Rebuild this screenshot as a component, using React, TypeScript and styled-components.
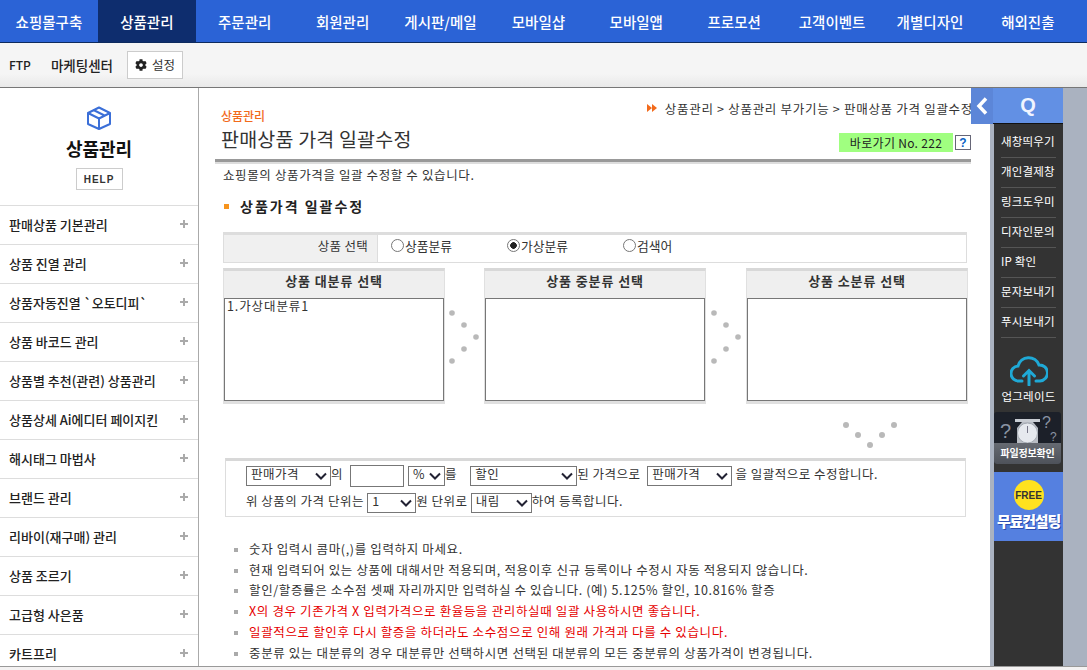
import React from 'react';
import styled, { createGlobalStyle } from 'styled-components';
import { FaCog } from 'react-icons/fa';

const GlobalStyle = createGlobalStyle`
  html, body { margin: 0; padding: 0; height: 100%; overflow: hidden; background: #f4f2f2; }
  body { font-family: "Noto Sans CJK KR", "Noto Sans", sans-serif; font-size: 12px; color: #333; }
  * { box-sizing: border-box; }
`;

const Page = styled.div`
  width: 1087px;
  height: 670px;
  display: flex;
  flex-direction: column;
  overflow: hidden;
`;

const TopNav = styled.nav`
  height: 43px;
  display: flex;
  flex: none;
  background: #2b63d6;
  border-bottom: 1px solid #0d2a5e;
`;

const NavItem = styled.a<{ $active?: boolean }>`
  width: 97.9px;
  display: flex;
  align-items: center;
  justify-content: center;
  color: #fff;
  font-size: 14.5px;
  font-weight: 500;
  background: ${(p) => (p.$active ? '#0e2d6e' : 'transparent')};
`;

const SubBar = styled.div`
  height: 45px;
  flex: none;
  display: flex;
  align-items: center;
  padding: 0 0 1px 9px;
  background: linear-gradient(#f5f5f5 70%, #e9e9e9);
  border-bottom: 1px solid #777;
  color: #222;
`;

const SubLink = styled.a<{ $gap: number }>`
  font-size: 13.5px;
  font-weight: 500;
  margin-right: ${(p) => p.$gap}px;
  &:first-child { font-size: 12px; }
`;

const SetupButton = styled.button`
  width: 56px;
  height: 28px;
  padding: 0;
  display: flex;
  align-items: center;
  justify-content: center;
  gap: 5px;
  border: 1px solid #ccc;
  background: #fff;
  color: #333;
  font: 12.5px "Noto Sans CJK KR", sans-serif;
`;

const Body = styled.div`
  height: 579px;
  flex: none;
  display: flex;
  border-bottom: 1px solid #999;
  background: #fff;
`;

const Sidebar = styled.aside`
  width: 199px;
  flex: none;
  border-right: 1px solid #aaa;
  overflow: hidden;
`;

const SideHead = styled.div`
  height: 117px;
  padding-top: 18px;
  display: flex;
  flex-direction: column;
  align-items: center;
`;

const SideTitle = styled.h2`
  margin: 5px 0 0;
  font-size: 18px;
  line-height: 26px;
  font-weight: 700;
  color: #111;
`;

const HelpBox = styled.div`
  width: 47px;
  height: 22px;
  margin-top: 7px;
  border: 1px solid #ccc;
  display: flex;
  align-items: center;
  justify-content: center;
  font: 700 10px "Liberation Sans", sans-serif;
  letter-spacing: 1px;
  color: #333;
`;

const SideItem = styled.div`
  height: 39px;
  border-top: 1px solid #ddd;
  padding: 0 10px 2px 9px;
  display: flex;
  align-items: center;
  justify-content: space-between;
  font-size: 13px;
  font-weight: 500;
  color: #222;
  white-space: nowrap;
`;

const Plus = styled.span`
  width: 8px;
  height: 8px;
  background:
    linear-gradient(#aaa, #aaa) center / 100% 2px no-repeat,
    linear-gradient(#aaa, #aaa) center / 2px 100% no-repeat;
`;

const Main = styled.main`
  flex: 1;
  min-width: 0;
  padding-left: 16px;
`;

const PageHead = styled.header`
  width: 758px;
  height: 74px;
  border-bottom: 3px solid #999;
  box-shadow: 0 2px 0 #ddd;
  display: flex;
  justify-content: space-between;
  white-space: nowrap;
`;

const TitleBlock = styled.div`
  padding: 20px 0 0 6px;
`;

const Crumb = styled.div`
  color: #f26a1b;
  font-size: 12px;
  line-height: 16px;
  font-weight: 500;
`;

const Title = styled.h1`
  margin: 1px 0 0;
  font-size: 19.5px;
  line-height: 28px;
  font-weight: 400;
  letter-spacing: 0.2px;
  color: #333;
`;

const HeadRight = styled.div`
  display: flex;
  flex-direction: column;
  align-items: flex-end;
  padding-top: 10px;
`;

const Breadcrumb = styled.div`
  display: flex;
  align-items: center;
  gap: 8px;
  height: 20px;
  font-size: 12.5px;
  letter-spacing: 0.7px;
  color: #333;
`;

const ShortcutRow = styled.div`
  display: flex;
  align-items: center;
  gap: 2px;
  margin: 15px 2px 0 0;
`;

const Shortcut = styled.div`
  width: 114px;
  height: 19px;
  background: #a0ff80;
  display: flex;
  align-items: center;
  justify-content: center;
  font-size: 12px;
  letter-spacing: 0.3px;
  color: #222;
`;

const HelpIcon = styled.div`
  width: 16px;
  height: 15px;
  border: 1px solid #667;
  background: #fff;
  display: flex;
  align-items: center;
  justify-content: center;
  color: #0b62c4;
  font: 700 12px "Liberation Sans", sans-serif;
`;

const Intro = styled.p`
  margin: 4px 0 0 8px;
  font-size: 12.5px;
  line-height: 18px;
  letter-spacing: 0.62px;
  color: #333;
`;

const SectionHead = styled.h3`
  margin: 10px 0 0 9px;
  height: 24px;
  display: flex;
  align-items: center;
  gap: 11px;
  font-size: 14px;
  font-weight: 700;
  letter-spacing: 2px;
  color: #222;
  &::before {
    content: '';
    width: 5px;
    height: 5px;
    background: #f7941d;
  }
`;

const ChoiceRow = styled.div`
  margin: 14px 0 0 8px;
  width: 744px;
  height: 31px;
  display: flex;
  border: 1px solid #ddd;
  border-top-width: 3px;
`;

const ChoiceLabel = styled.div`
  width: 154px;
  background: #f0f0f0;
  border-right: 1px solid #ddd;
  text-align: right;
  padding: 2px 9px 0 0;
  font-size: 12.5px;
  line-height: 17px;
  letter-spacing: 0.3px;
`;

const Choice = styled.label<{ $w: number; $pad?: number }>`
  width: ${(p) => p.$w}px;
  padding: 2px 0 0 ${(p) => p.$pad ?? 0}px;
  display: flex;
  align-items: flex-start;
  font-size: 12.8px;
  line-height: 17px;
`;

const Radio = styled.span<{ $on?: boolean }>`
  width: 13px;
  height: 13px;
  margin: 2px 1px 0 0;
  border: 1px solid #777;
  border-radius: 50%;
  background: ${(p) => (p.$on ? 'radial-gradient(circle, #222 0 3px, #fff 3.6px)' : '#fff')};
`;

const PickerRow = styled.div`
  margin: 5px 0 0 8px;
  display: grid;
  grid-template-columns: 222px 39px 222px 40px 222px;
`;

const Picker = styled.div`
  height: 136px;
  border: 1px solid #e0e0e0;
  border-top: 3px solid #d8d8d8;
  border-bottom-width: 3px;
`;

const PickerHead = styled.div`
  height: 27px;
  background: #efefef;
  text-align: center;
  font-size: 13px;
  line-height: 20px;
  font-weight: 700;
  letter-spacing: 0.9px;
  color: #333;
`;

const ListBox = styled.div`
  height: 103px;
  border: 1px solid #777;
  background: #fff;
  padding: 0 2px;
  font-size: 12.5px;
  line-height: 14px;
  letter-spacing: 0.9px;
`;

const DotsSide = styled.svg`
  width: 39px;
  height: 60px;
  margin-top: 41px;
  justify-self: end;
`;

const DotsDownRow = styled.div`
  height: 54px;
  display: flex;
  justify-content: flex-end;
  padding: 18px 70px 0 0;
  width: 752px;
`;

const FormBox = styled.div`
  margin-left: 10px;
  width: 741px;
  height: 59px;
  border: 1px solid #ddd;
  border-top: 3px solid #d8d8d8;
  padding: 5px 0 0 20px;
  font-size: 12.5px;
  letter-spacing: 0.5px;
  line-height: 16px;
`;

const FormLine = styled.div`
  height: 20px;
  margin-bottom: 7px;
  display: flex;
  align-items: flex-start;
  white-space: pre;
`;

const FakeSelect = styled.span<{ $w: number }>`
  width: ${(p) => p.$w}px;
  height: 20px;
  flex: none;
  border: 1px solid #777;
  display: flex;
  align-items: flex-start;
  justify-content: space-between;
  padding: 0 3px 0 4px;
  line-height: 14px;
  letter-spacing: 0.5px;
`;

const Chevron = styled.svg`
  width: 12px;
  height: 8px;
  margin-top: 5px;
  flex: none;
`;

const FakeInput = styled.span`
  width: 54px;
  height: 22px;
  flex: none;
  border: 1px solid #777;
  margin: -1px 4px 0 7px;
`;

const Notes = styled.ul`
  list-style: none;
  margin: 21px 0 0 19px;
  padding: 0;
`;

const Note = styled.li<{ $red?: boolean }>`
  height: 20.8px;
  display: flex;
  align-items: center;
  gap: 11px;
  font-size: 12.5px;
  white-space: nowrap;
  letter-spacing: 0.64px;
  color: ${(p) => (p.$red ? '#e60000' : '#333')};
  &::before {
    content: '';
    width: 4px;
    height: 4px;
    margin-top: 3px;
    background: #aaa;
  }
`;

const Quick = styled.aside`
  width: 116px;
  flex: none;
  margin-left: -3px;
  display: flex;
  flex-direction: column;
  position: relative;
`;

const QuickTop = styled.div`
  height: 36px;
  flex: none;
  display: flex;
  background: #aab2c0;
`;

const QuickArrow = styled.div`
  width: 22px;
  background: #5c86d8;
  display: flex;
  align-items: center;
  justify-content: center;
`;

const QuickQ = styled.div`
  width: 70px;
  background: #6290e4;
  border-bottom: 1px solid #111;
  color: #f0f4ff;
  display: flex;
  align-items: center;
  justify-content: center;
  font: 700 20px "Liberation Sans", sans-serif;
`;

const QuickBody = styled.div`
  flex: 1;
  display: flex;
  padding-left: 19px;
  background: linear-gradient(to right, #fff 19px, #aab2c0 19px);
`;

const QuickColumn = styled.div`
  width: 69px;
  flex: none;
  margin-left: 4px;
  padding-top: 4px;
  background: #333;
`;

const QuickLink = styled.a`
  display: block;
  height: 30px;
  margin: 0 7px;
  border-bottom: 1px solid #555;
  color: #fff;
  font-size: 11.5px;
  line-height: 26px;
  white-space: nowrap;
  letter-spacing: 0.2px;
`;

const Upgrade = styled.div`
  margin-top: 18px;
  height: 56px;
  display: flex;
  flex-direction: column;
  align-items: center;
  color: #fff;
  font-size: 11.5px;
  letter-spacing: 0.2px;
  line-height: 17px;
  svg { margin-bottom: 2px; }
`;

const FileInfo = styled.div`
  width: 67px;
  height: 52px;
  border-radius: 3px;
  overflow: hidden;
  background: #1c2029;
  display: flex;
  flex-direction: column;
`;

const FileInfoLabel = styled.div`
  height: 21px;
  flex: none;
  background: linear-gradient(#666a72, #4e525a);
  color: #fff;
  font-size: 10px;
  font-weight: 700;
  line-height: 20px;
  text-align: center;
  letter-spacing: -0.2px;
`;

const Consult = styled.div`
  width: 69px;
  height: 69px;
  margin-top: 8px;
  background: #5580e0;
  display: flex;
  flex-direction: column;
  align-items: center;
  padding-top: 8px;
`;

const FreeBadge = styled.div`
  width: 30px;
  height: 30px;
  border-radius: 50%;
  background: #ffe21f;
  color: #333;
  display: flex;
  align-items: center;
  justify-content: center;
  font: 700 10px "Liberation Sans", sans-serif;
`;

const ConsultText = styled.div`
  margin-top: 1px;
  color: #fff;
  font-size: 15px;
  line-height: 20px;
  font-weight: 900;
  letter-spacing: -1.2px;
  white-space: nowrap;
  text-shadow: 1px 1px 0 #2a4cb0;
`;

const navItems = ['쇼핑몰구축', '상품관리', '주문관리', '회원관리', '게시판/메일', '모바일샵', '모바일앱', '프로모션', '고객이벤트', '개별디자인', '해외진출'];
const sideItems = ['판매상품 기본관리', '상품 진열 관리', '상품자동진열 `오토디피`', '상품 바코드 관리', '상품별 추천(관련) 상품관리', '상품상세 Ai에디터 페이지킨', '해시태그 마법사', '브랜드 관리', '리바이(재구매) 관리', '상품 조르기', '고급형 사은품', '카트프리'];
const quickLinks = ['새창띄우기', '개인결제창', '링크도우미', '디자인문의', 'IP 확인', '문자보내기', '푸시보내기'];
const pickers = ['상품 대분류 선택', '상품 중분류 선택', '상품 소분류 선택'];
const notes: { text: string; red?: boolean }[] = [
  { text: '숫자 입력시 콤마(,)를 입력하지 마세요.' },
  { text: '현재 입력되어 있는 상품에 대해서만 적용되며, 적용이후 신규 등록이나 수정시 자동 적용되지 않습니다.' },
  { text: '할인/할증률은 소수점 셋째 자리까지만 입력하실 수 있습니다. (예) 5.125% 할인, 10.816% 할증' },
  { text: 'X의 경우 기존가격 X 입력가격으로 환율등을 관리하실때 일괄 사용하시면 좋습니다.', red: true },
  { text: '일괄적으로 할인후 다시 할증을 하더라도 소수점으로 인해 원래 가격과 다를 수 있습니다.', red: true },
  { text: '중분류 있는 대분류의 경우 대분류만 선택하시면 선택된 대분류의 모든 중분류의 상품가격이 변경됩니다.' },
];

const SideDots = () => (
  <DotsSide viewBox="0 0 39 60">
    {[[7, 4], [19, 16], [31, 28], [19, 40], [7, 52]].map(([cx, cy]) => (
      <circle key={cy} cx={cx} cy={cy} r="2.800" fill="#b9b9b9" />
    ))}
  </DotsSide>
);

const Select = ({ w, children }: { w: number; children: React.ReactNode }) => (
  <FakeSelect $w={w}>
    {children}
    <Chevron viewBox="0 0 12 8">
      <path d="M1 1.500 6 6.500 11 1.500" fill="none" stroke="#223" strokeWidth="2" />
    </Chevron>
  </FakeSelect>
);

export default function App() {
  return (
    <Page>
      <GlobalStyle />
      <TopNav>
        {navItems.map((label, i) => (
          <NavItem key={label} $active={i === 1}>{label}</NavItem>
        ))}
      </TopNav>
      <SubBar>
        <SubLink $gap={20}>FTP</SubLink>
        <SubLink $gap={14}>마케팅센터</SubLink>
        <SetupButton><FaCog size={12} color="#222" />설정</SetupButton>
      </SubBar>
      <Body>
        <Sidebar>
          <SideHead>
            <svg width="26" height="24" viewBox="0 0 26 24" fill="none" stroke="#3b6fd8" strokeWidth="2" strokeLinejoin="round">
              <path d="M13 1.500 24 7v11l-11 5-11-5V7z" />
              <path d="M2 7l11 5.500L24 7M13 12.500V23M7.500 4l11 5.500" />
            </svg>
            <SideTitle>상품관리</SideTitle>
            <HelpBox>HELP</HelpBox>
          </SideHead>
          {sideItems.map((label) => (
            <SideItem key={label}>{label}<Plus /></SideItem>
          ))}
        </Sidebar>
        <Main>
          <PageHead>
            <TitleBlock>
              <Crumb>상품관리</Crumb>
              <Title>판매상품 가격 일괄수정</Title>
            </TitleBlock>
            <HeadRight>
              <Breadcrumb>
                <svg width="10" height="8" viewBox="0 0 10 8"><path d="M0 0l5 4-5 4zM5 0l5 4-5 4z" fill="#f26a1b" /></svg>
                상품관리 &gt; 상품관리 부가기능 &gt; 판매상품 가격 일괄수정
              </Breadcrumb>
              <ShortcutRow>
                <Shortcut>바로가기 No. 222</Shortcut>
                <HelpIcon>?</HelpIcon>
              </ShortcutRow>
            </HeadRight>
          </PageHead>
          <Intro>쇼핑몰의 상품가격을 일괄 수정할 수 있습니다.</Intro>
          <SectionHead>상품가격 일괄수정</SectionHead>
          <ChoiceRow>
            <ChoiceLabel>상품 선택</ChoiceLabel>
            <Choice $w={129} $pad={13}><Radio />상품분류</Choice>
            <Choice $w={116}><Radio $on />가상분류</Choice>
            <Choice $w={100}><Radio />검색어</Choice>
          </ChoiceRow>
          <PickerRow>
            <Picker>
              <PickerHead>{pickers[0]}</PickerHead>
              <ListBox>1.가상대분류1</ListBox>
            </Picker>
            <SideDots />
            <Picker>
              <PickerHead>{pickers[1]}</PickerHead>
              <ListBox />
            </Picker>
            <SideDots />
            <Picker>
              <PickerHead>{pickers[2]}</PickerHead>
              <ListBox />
            </Picker>
          </PickerRow>
          <DotsDownRow>
            <svg width="54" height="26" viewBox="0 0 54 26">
              {[[3, 3], [15, 13], [27, 23], [39, 13], [51, 3]].map(([cx, cy]) => (
                <circle key={cx} cx={cx} cy={cy} r="3" fill="#b9b9b9" />
              ))}
            </svg>
          </DotsDownRow>
          <FormBox>
            <FormLine>
              <Select w={85}>판매가격</Select>
              의
              <FakeInput />
              <Select w={37}>%</Select>
              를{'    '}
              <Select w={107}>할인</Select>
              {'된 가격으로  '}<Select w={85}>판매가격</Select> 을 일괄적으로 수정합니다.
            </FormLine>
            <FormLine>
              {'위 상품의 가격 단위는 '}
              <Select w={49}>1</Select>
              원 단위로 <Select w={61}>내림</Select>
              하여 등록합니다.
            </FormLine>
          </FormBox>
          <Notes>
            {notes.map((n) => (
              <Note key={n.text} $red={n.red}>{n.text}</Note>
            ))}
          </Notes>
        </Main>
        <Quick>
          <QuickTop>
            <QuickArrow>
              <svg width="12" height="18" viewBox="0 0 12 18" fill="none" stroke="#fff" strokeWidth="3.500"><path d="M10 1.500 3 9l7 7.500" /></svg>
            </QuickArrow>
            <QuickQ>Q</QuickQ>
          </QuickTop>
          <QuickBody>
            <QuickColumn>
              {quickLinks.map((label) => (
                <QuickLink key={label}>{label}</QuickLink>
              ))}
              <Upgrade>
                <svg width="38" height="30" viewBox="0 0 38 30" fill="none" stroke="#1fa9d6" strokeWidth="3" strokeLinecap="round">
                  <path d="M12 25H9a7.500 7.500 0 0 1-1-15A11 11 0 0 1 29 9a8 8 0 0 1 1 16h-4" />
                  <path d="M19 29V15M13.500 20 19 14.500 24.500 20" />
                </svg>
                업그레이드
              </Upgrade>
              <FileInfo>
                <svg width="67" height="31" viewBox="0 0 67 31">
                  <text x="6" y="26" fontSize="20" fill="#8a93a3" fontFamily="Liberation Sans">?</text>
                  <text x="48" y="16" fontSize="16" fill="#8a93a3" fontFamily="Liberation Sans">?</text>
                  <text x="56" y="29" fontSize="12" fill="#8a93a3" fontFamily="Liberation Sans">?</text>
                  <rect x="21" y="7" width="25" height="3" fill="#c8ccd2" />
                  <path d="M28 10h11l5 6v15H23V16z" fill="#b9bdc4" />
                  <circle cx="33.500" cy="21" r="10" fill="#e6e9ee" stroke="#a4aab2" />
                  <path d="M33.500 14v7" stroke="#778" />
                </svg>
                <FileInfoLabel>파일정보확인</FileInfoLabel>
              </FileInfo>
              <Consult>
                <FreeBadge>FREE</FreeBadge>
                <ConsultText>무료컨설팅</ConsultText>
              </Consult>
            </QuickColumn>
          </QuickBody>
        </Quick>
      </Body>
    </Page>
  );
}
